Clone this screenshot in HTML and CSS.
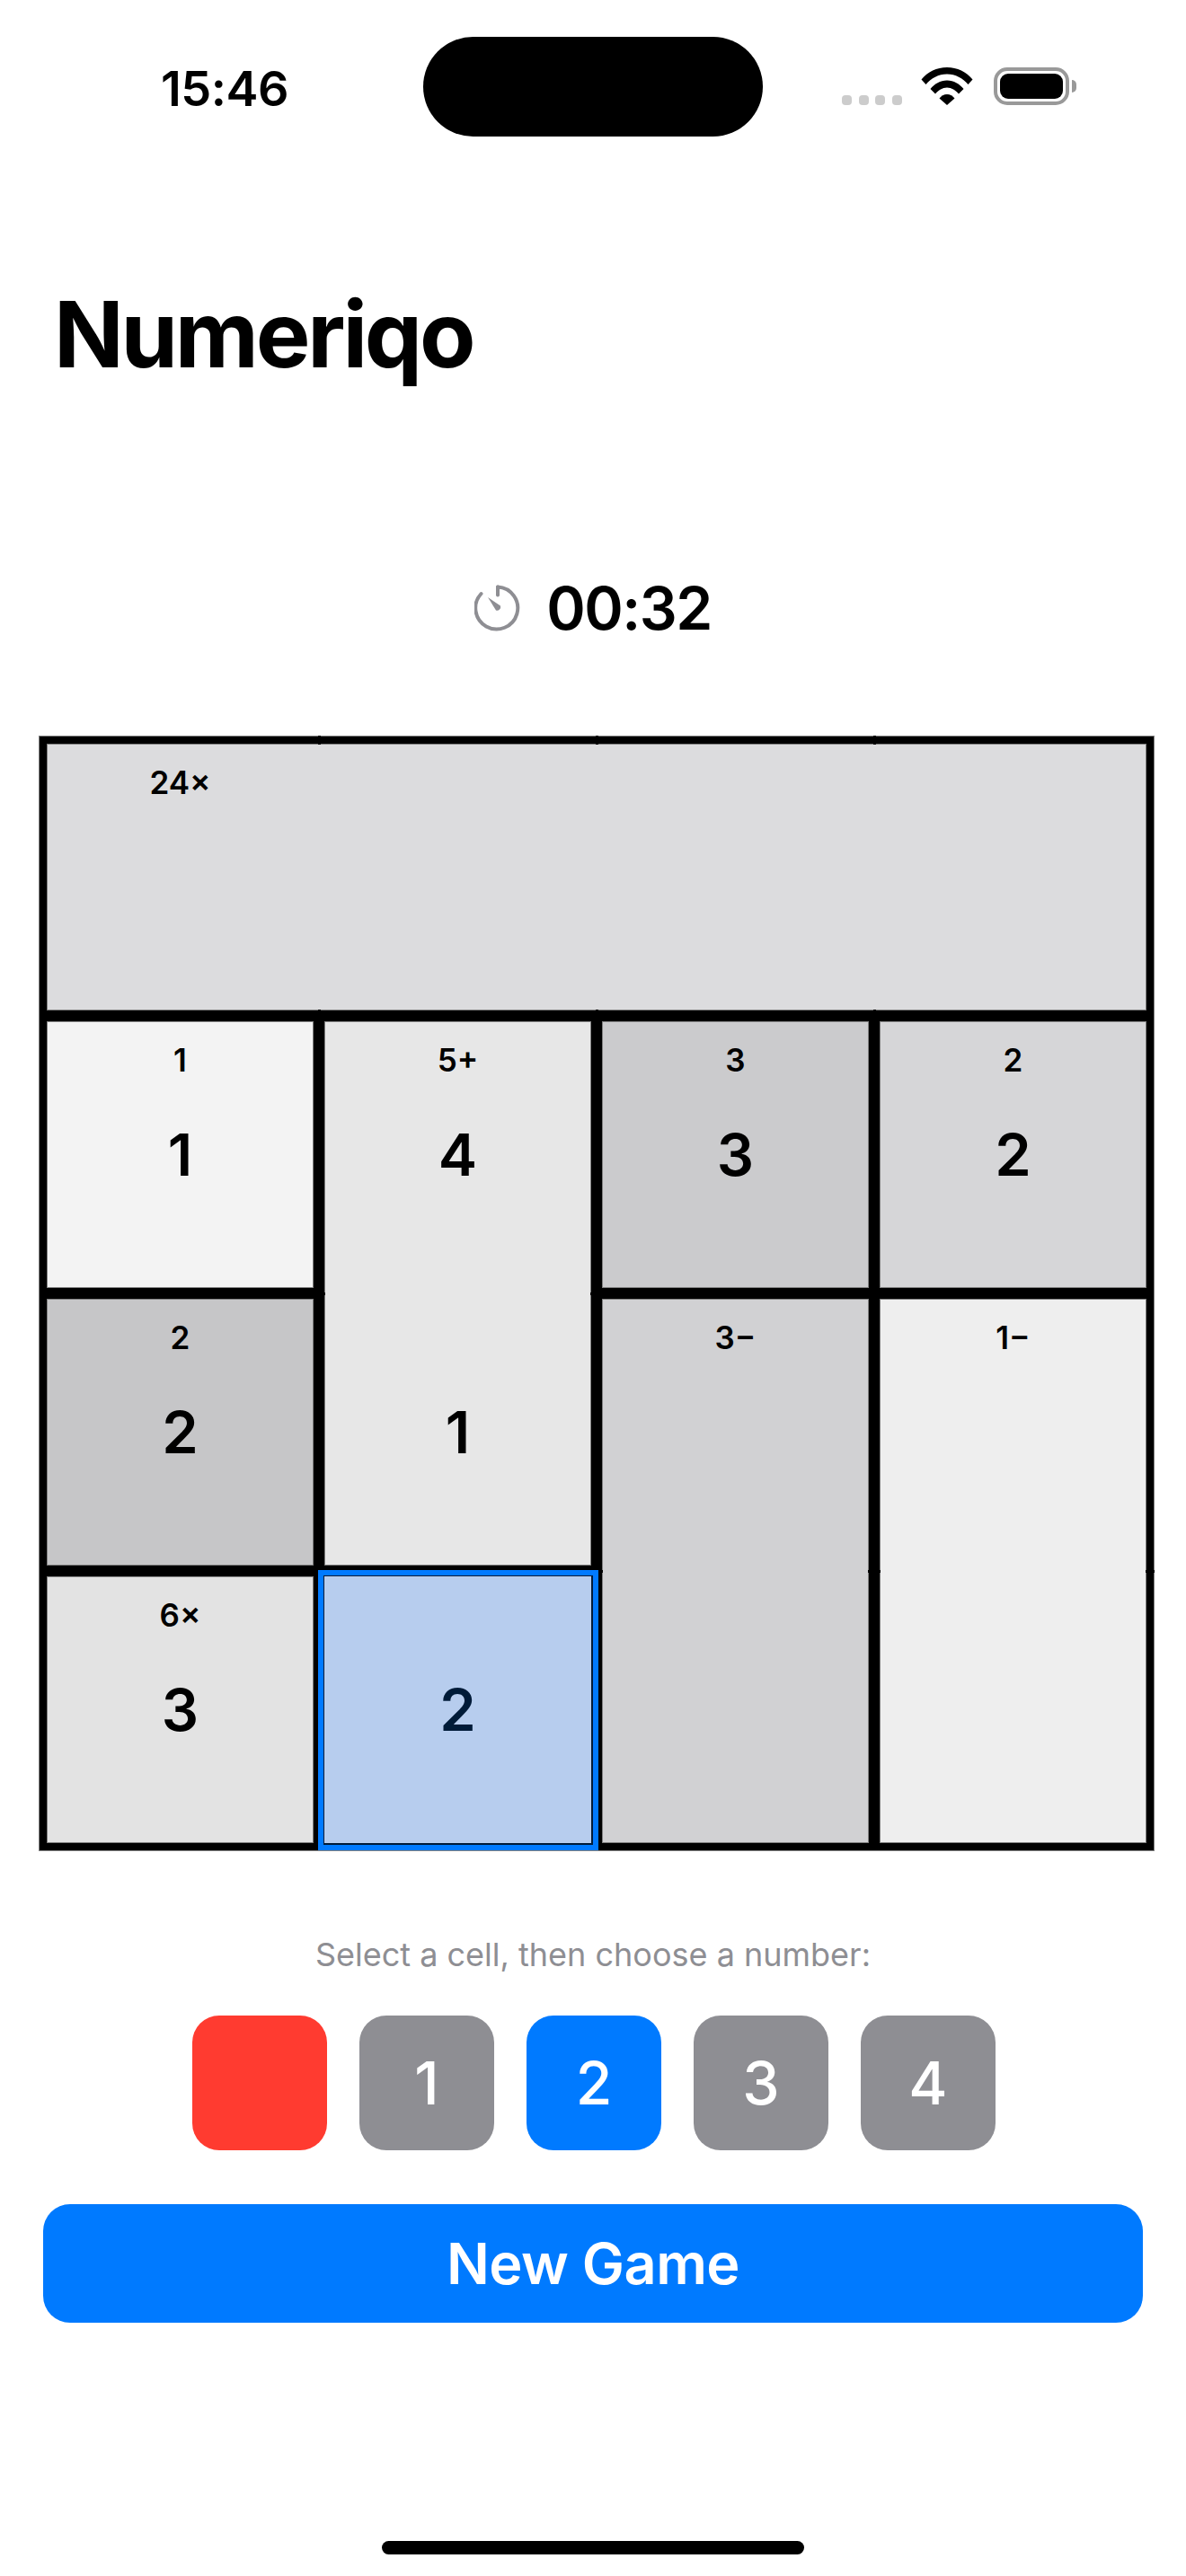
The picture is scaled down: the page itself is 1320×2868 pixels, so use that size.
FILE: index.html
```html
<!DOCTYPE html>
<html lang="en">

<head>
    <meta charset="UTF-8">
    <meta name="viewport" content="width=device-width, initial-scale=1.0">
    <title>Numeriqo</title>
    <link rel="stylesheet" href="styles.css">
</head>

<body>
    <div class="screen">
        <div class="status-bar">
            <span class="clock">15:46</span>
            <div class="island"></div>
            <div class="status-icons">
                <div class="signal"><i></i><i></i><i></i><i></i></div>
                <svg class="wifi" width="58" height="42" viewBox="0 0 58 42">
                    <path d="M0.5 13.5C7.5 5 17.5 0 29 0s21.500 5 28.500 13.500l-5 5.500C46.500 12 38.500 7.500 29 7.500S11.500 12 5.500 19z" />
                    <path d="M10.500 24C15 18.500 21.500 14.500 29 14.500s14 4 18.500 9.500l-5.500 5.500C38.500 25.500 34 22.500 29 22.500s-9.500 3-13 7z" />
                    <path d="M20.500 34.500C22.500 32 25.500 30 29 30s6.500 2 8.500 4.500L29 42z" />
                </svg>
                <div class="battery"><div class="battery-fill"></div></div>
                <div class="battery-nub"></div>
            </div>
        </div>

        <h1 class="title">Numeriqo</h1>

        <div class="timer">
            <svg class="timer-icon" width="52" height="52" viewBox="0 0 52 52">
                <path d="M26 2.500a23.500 23.500 0 1 1-18.500 7.500" fill="none" stroke="#8e8e93" stroke-width="4" stroke-linecap="round" />
                <path d="M26 2.500v9" fill="none" stroke="#8e8e93" stroke-width="4" stroke-linecap="round" />
                <path d="M15 14l14 9.500a4 4 0 0 1-5 5z" fill="#8e8e93" />
            </svg>
            <span>00:32</span>
        </div>

        <div class="board">
            <div class="cell c-top t b l"><span class="cage">24×</span></div>
            <div class="cell c-top t b seam-v"></div>
            <div class="cell c-top t b seam-v"></div>
            <div class="cell c-top t b r seam-v"></div>

            <div class="cell c-one t b l r"><span class="cage">1</span><span class="digit">1</span></div>
            <div class="cell c-five t l r"><span class="cage">5+</span><span class="digit">4</span></div>
            <div class="cell c-three t b l r"><span class="cage">3</span><span class="digit">3</span></div>
            <div class="cell c-two t b l r"><span class="cage">2</span><span class="digit">2</span></div>

            <div class="cell c-dark t b l r"><span class="cage">2</span><span class="digit">2</span></div>
            <div class="cell c-five b l r seam-h"><span class="digit">1</span></div>
            <div class="cell c-minus3 t l r"><span class="cage">3−</span></div>
            <div class="cell c-minus1 t l r"><span class="cage">1−</span></div>

            <div class="cell c-six t b l r"><span class="cage">6×</span><span class="digit">3</span></div>
            <div class="cell c-sel t b l r selected"><span class="digit">2</span></div>
            <div class="cell c-minus3 b l r seam-h"></div>
            <div class="cell c-minus1 b l r seam-h"></div>
        </div>

        <p class="hint">Select a cell, then choose a number:</p>

        <div class="pad">
            <button class="key key-clear"></button>
            <button class="key">1</button>
            <button class="key key-active">2</button>
            <button class="key">3</button>
            <button class="key">4</button>
        </div>

        <button class="new-game">New Game</button>

        <div class="home-bar"></div>
    </div>
</body>

</html>
```

FILE: styles.css
```css
* {
    box-sizing: border-box;
}

body {
    margin: 0;
    font-family: Inter, "Noto Sans", sans-serif;
    color: #000;
    background-color: #fff;
}

.screen {
    width: 1320px;
    height: 2868px;
    display: flex;
    flex-direction: column;
    overflow: hidden;
}

/* status bar */
.status-bar {
    height: 152px;
    padding-top: 41px;
    display: grid;
    grid-template-columns: 471px 378px 471px;
}

.clock {
    padding: 26px 0 0 179px;
    font-size: 54px;
    line-height: 63px;
    font-weight: 600;
    letter-spacing: -0.5px;
}

.island {
    height: 111px;
    background-color: #000;
    border-radius: 56px;
}

.status-icons {
    display: flex;
    align-items: flex-start;
    padding: 34px 0 0 88px;
}

.signal {
    display: flex;
    gap: 7.5px;
    margin-top: 31px;
    margin-right: 21.5px;
}

.signal i {
    width: 11px;
    height: 11px;
    background-color: #ccc;
    border-radius: 4px;
}

.wifi {
    margin-right: 23px;
}

.battery {
    width: 84px;
    height: 42px;
    padding: 3px;
    border: solid 4px #999;
    border-radius: 15px;
}

.battery-fill {
    height: 100%;
    background-color: #000;
    border-radius: 9px;
}

.battery-nub {
    width: 5px;
    height: 14px;
    margin: 14px 0 0 3px;
    background-color: #999;
    border-radius: 0 5px 5px 0;
}

/* title + timer */
.title {
    margin: 160px 0 0 60px;
    font-size: 102px;
    line-height: 120px;
    font-weight: 700;
    letter-spacing: -3.2px;
}

.timer {
    margin-top: 212px;
    height: 66px;
    display: flex;
    align-items: center;
    justify-content: center;
    gap: 28px;
    font-size: 66px;
    line-height: 66px;
    font-weight: 600;
    letter-spacing: -1.5px;
}

/* board */
.board {
    width: 1240px;
    margin: 110px 0 0 44px;
    border: solid 2px #000;
    box-shadow: 0 0 0 1px #808080;
    display: grid;
    grid-template-columns: repeat(4, 309px);
    grid-template-rows: repeat(4, 309px);
}

.cell {
    --t: 0;
    --r: 0;
    --b: 0;
    --l: 0;
    position: relative;
    display: flex;
    justify-content: center;
    align-items: center;
    padding: calc((1 - var(--t)) * 6px) calc((1 - var(--r)) * 6px) calc((1 - var(--b)) * 6px) calc((1 - var(--l)) * 6px);
    border-style: solid;
    border-color: #000;
    border-width: calc(var(--t) * 6px) calc(var(--r) * 6px) calc(var(--b) * 6px) calc(var(--l) * 6px);
    box-shadow: inset calc(var(--l) * 1px) calc(var(--t) * 1px) 0 #808080,
        inset calc(var(--r) * -1px) calc(var(--b) * -1px) 0 #808080;
}

.t { --t: 1; }
.r { --r: 1; }
.b { --b: 1; }
.l { --l: 1; }

.c-top { background-color: #dcdcde; }
.c-one { background-color: #f3f3f3; }
.c-five { background-color: #e7e7e7; }
.c-three { background-color: #cbcbcd; }
.c-two { background-color: #d6d6d8; }
.c-dark { background-color: #c6c6c8; }
.c-minus3 { background-color: #d1d1d3; }
.c-minus1 { background-color: #eee; }
.c-six { background-color: #e3e3e3; }
.c-sel { background-color: #ebe4ea; }

/* little nicks where two cells of one cage meet the thick lines */
.seam-v::before,
.seam-v::after {
    content: "";
    position: absolute;
    left: -1px;
    width: 3px;
    background-color: #000;
}

.seam-v::before {
    top: -9px;
    height: 10px;
}

.seam-v::after {
    bottom: -13px;
    height: 14px;
}

.seam-h::before,
.seam-h::after {
    content: "";
    position: absolute;
    top: -1px;
    height: 3px;
    background-color: #000;
}

.seam-h::before {
    left: -13px;
    width: 14px;
}

.seam-h::after {
    right: -13px;
    width: 14px;
}

.cell:nth-child(4n).seam-h::after {
    right: -9px;
    width: 10px;
}

.cage {
    position: absolute;
    top: 23px;
    left: calc(var(--l) * -6px);
    right: calc(var(--r) * -6px);
    text-align: center;
    font-size: 35px;
    line-height: 40px;
    font-weight: 600;
}

.digit {
    font-size: 65px;
    line-height: 80px;
    font-weight: 600;
}

/* selected highlight sits over the cell */
.selected {
    z-index: 1;
    box-shadow: none;
}

.selected::after {
    content: "";
    position: absolute;
    top: -7px;
    left: -7px;
    right: -8px;
    bottom: -8px;
    border: solid 6px #007aff;
    background-color: rgba(0, 122, 255, 0.22);
    background-clip: padding-box;
}

/* controls */
.hint {
    margin: 95px 0 0;
    text-align: center;
    font-size: 36px;
    line-height: 42px;
    color: #8e8e93;
}

.pad {
    margin-top: 47px;
    display: flex;
    justify-content: center;
    gap: 36px;
    padding-left: 2px;
}

.key {
    width: 150px;
    height: 150px;
    padding: 0;
    border: none;
    border-radius: 30px;
    color: #fff;
    background-color: #8e8e93;
    font-family: inherit;
    font-size: 66px;
    font-weight: 500;
}

.key-clear {
    background-color: #ff3b30;
}

.key-active {
    background-color: #007aff;
}

.new-game {
    width: 1224px;
    height: 132px;
    margin: 60px 0 0 48px;
    border: none;
    border-radius: 30px;
    color: #fff;
    background-color: #007aff;
    font-family: inherit;
    font-size: 63px;
    font-weight: 600;
    letter-spacing: -0.5px;
}

.home-bar {
    width: 470px;
    height: 15px;
    margin: auto auto 24px;
    background-color: #000;
    border-radius: 8px;
}
```
